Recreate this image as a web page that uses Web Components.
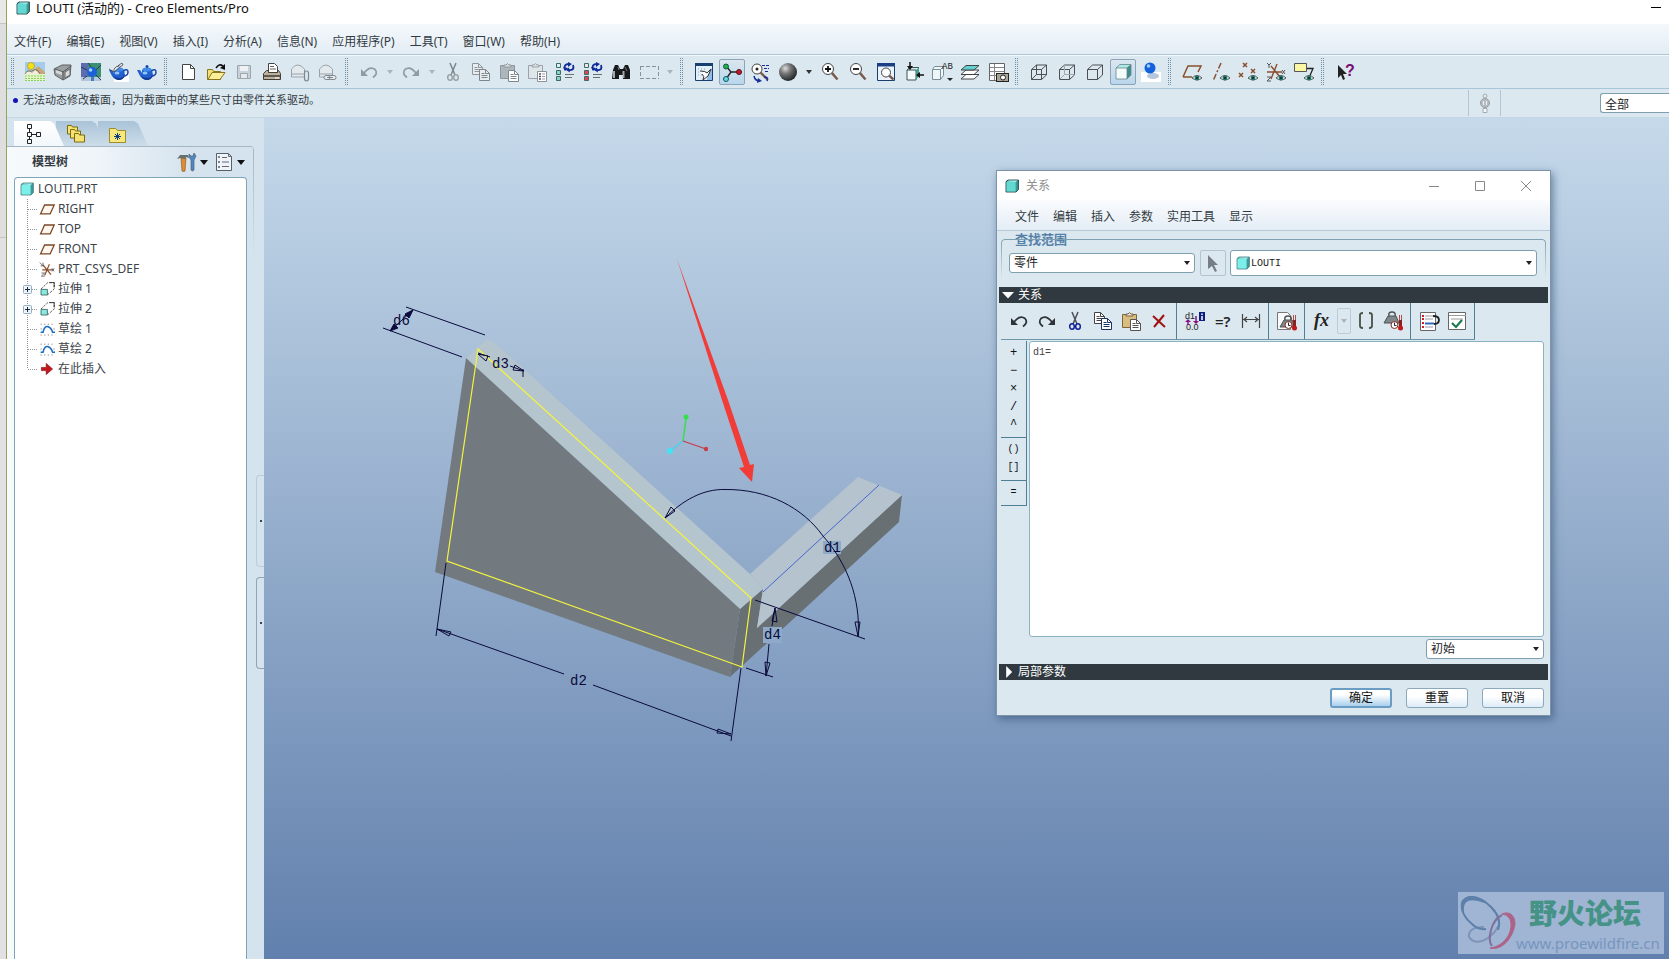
<!DOCTYPE html>
<html lang="zh-CN">
<head>
<meta charset="utf-8">
<title>LOUTI (活动的) - Creo Elements/Pro</title>
<style>
html,body{margin:0;height:100%;overflow:hidden}
body{font:12px/16px "Noto Sans","Noto Sans CJK SC",sans-serif;color:#333b42}
</style>
</head>
<body>
<creo-app></creo-app>
<script>
const RESET = `*{box-sizing:border-box}:host{display:block}
button,select,textarea{font:inherit;color:inherit;margin:0;padding:0;border:0;background:none}
svg{display:block}`;

function define(name, css, html, init) {
  const t = document.createElement('template');
  t.innerHTML = `<style>${RESET}${css}</style>${html}`;
  customElements.define(name, class extends HTMLElement {
    constructor() {
      super();
      this.attachShadow({mode: 'open'}).append(t.content.cloneNode(true));
    }
    connectedCallback() { if (init) init(this, this.shadowRoot); }
  });
}

const eye = `<path d="M10 16q5-5 10 0q-5 4-10 0z" fill="#e8f0ee" stroke="#333" stroke-width=".8"/><circle cx="15" cy="16" r="2.4" fill="#1c7a66"/><circle cx="15" cy="16" r="1" fill="#123"/>`;
const lens = (x, y, r, s) => `<path d="M${x+r*.7} ${y+r*.7}L17.500 17.500" stroke="#7a5a4c" stroke-width="2.400"/><circle cx="${x}" cy="${y}" r="${r}" fill="#fff" stroke="#444" stroke-width="1"/>${s}`;
const undo = c => `<path d="M2 7v7h7z" fill="${c}"/><path d="M5 11Q11 3.500 16 7.500Q19.500 11.500 14 15.500" fill="none" stroke="${c}" stroke-width="1.800"/>`;
const redo = c => `<g transform="matrix(-1 0 0 1 20 0)">${undo(c)}</g>`;
const cut = (a, b) => `<path d="M7 1l5 12M13 1L8 13" stroke="${a}" stroke-width="1.500"/><g fill="none" stroke="${b}" stroke-width="1.500"><ellipse cx="7" cy="15.500" rx="2.300" ry="2.800"/><ellipse cx="13" cy="15.500" rx="2.300" ry="2.800"/></g>`;
const sheet = (x, y, c, f) => `<path d="M${x} ${y}h6l4 4v7h-10z" fill="${f}" stroke="${c}"/><path d="M${x+6} ${y}v4h4M${x+2} ${y+4}h3M${x+2} ${y+6}h6M${x+2} ${y+8}h6" fill="none" stroke="${c}"/>`;
const copy = (a, b, f) => sheet(1.5, 1.5, a, f) + sheet(8.500, 7.500, b, f);
const clip = (c, f) => `<path d="M1.500 3.500h14v13h-14z" fill="${f}" stroke="${c}"/><path d="M5 5V3h2q1.500-3 3 0h2v2z" fill="#dde3e6" stroke="${c}"/>`;
const paste = (c, f, s) => clip(c, f) + sheet(9.500, 8.500, s, '#fff');
const pot = `<path d="M5 8q5-3 10 0l1 5q-2 5-6 5t-7-4L0 8l3 0 2 3z" fill="#2360cf"/><path d="M14 9q5-3 5 1t-5 4" fill="none" stroke="#1746a8" stroke-width="1.500"/><ellipse cx="10" cy="7.500" rx="4.500" ry="2" fill="#3f8bea"/><circle cx="10" cy="4.500" r="1.500" fill="#1746a8"/><ellipse cx="8" cy="11" rx="2.500" ry="1.500" fill="#8fc4f8"/><path d="M4 14q6 4 12 0-2 4-6 4t-6-4z" fill="#12398f"/>`;
const regen = (a, b) => `<g stroke="#3c6c68"><path d="M1.500 1.500h4v4h-4z" fill="${a}"/><path d="M1.500 8.500h4v4h-4zM1.500 14.500h4v4h-4z" fill="${b}"/></g><path d="M10 8q-2-6 4-6M18 3q2 6-5 5" fill="none" stroke="#102c9a" stroke-width="1.800"/><path d="M13 0l4 2-4 3zM14 5.500L11 8l4 2.500zM8 5l2 4 3-3z" fill="#102c9a"/><path d="M10 12.500h9M10 15.500h7" stroke="#67706f"/>`;
const box = extra => `<g fill="none" stroke="#4c4f54"><path d="M2.500 7.500h10v10h-10zM2.500 7.500l5-4.500h10l-5 4.500M17.500 3v10l-5 4.500"/>${extra}</g>`;
const solid = `<path d="M3 6l4-3.500h11L14 6z" fill="#aee9ea"/><path d="M14 6l4-3.500V13l-4 4z" fill="#3e8d8d"/><path d="M3 6h11v11H3z" fill="#f3fbfb"/><path d="M3 6l4-3.500h11V13l-4 4H3zM14 6v11M3 6h11l4-3.500" fill="none" stroke="#68868c" stroke-width=".8"/>`;
const part = (f, s) => `<path d="M2.500 4.500L5 2.500h13v12l-3 3H2.500z" fill="#3d9999" stroke="${s}"/><path d="M3 5h11.500v12H3z" fill="${f}"/><path d="M3.500 4.500l2.500-1.500h11L14.500 5z" fill="#a6f1ed"/>`;
const weight = `<path d="M2 14l4-7h8l3 7z" fill="#80878a" stroke="#4c5356"/><path d="M7 7q-1-4 3-4t3 4" fill="none" stroke="#4c5356" stroke-width="1.500"/>`;
const thermo = `<circle cx="11.500" cy="14" r="3.500" fill="#fff" stroke="#8b2a20"/><path d="M11.500 11.500v3h2" stroke="#222" fill="none"/><path d="M17.500 4v13" stroke="#8b2020" stroke-width="3"/><path d="M17.500 4v5" stroke="#f4e4e4" stroke-width="1.500"/><circle cx="17.500" cy="17" r="2.500" fill="#c01818"/>`;
const folder = (x, y) => `<path d="M${x} ${y}h4l1 1.500h5v7h-10z" fill="#f5e273" stroke="#7b6a10"/>`;
const mono = 'font-family="Liberation Mono,monospace"';

const ICONS = {
  scene: `<path d="M0 0h20v12H0z" fill="#a4cdec"/><path d="M0 12l4-4 3 2 6-6 7 6v4H0z" fill="#c6a77a"/><path d="M0 11l4-2 3 2 3-3 5 4H0z" fill="#f4ece0"/><path d="M0 12q2-4 4-3t5-1 6 4" stroke="#665" stroke-width=".8" fill="none"/><circle cx="6" cy="4" r="3.500" fill="#f5df19" stroke="#a68c10" stroke-width=".6"/><path d="M0 12h20v7H0z" fill="#e4f5c8"/><path d="M0 14h20M0 16.500h20M0 18.500h20" stroke="#87d35c" stroke-dasharray="2 1"/>`,
  view: `<path d="M1 7l8-4h9l-1 11-7 4-8-5z" fill="#9a9fa1" stroke="#5c6163"/><path d="M2 7l8 3v8M10 10l8-6" fill="none" stroke="#555"/><path d="M3 8l6 2v3l-6-2z" fill="#d4d8d9"/><path d="M12 10l5-3v6l-5 3z" fill="#d8dcdd" stroke="#666"/>`,
  room: `<path d="M0 1h20v18H0z" fill="#3c8e74"/><path d="M0 1h7v18H0z" fill="#5c6cad"/><path d="M0 15h20v4H0z" fill="#b5c7de"/><path d="M7 1l4 5M20 3l-5 5M0 5l6 3M2 17l4-3M15 13l5 5" stroke="#223f50"/><circle cx="11" cy="10" r="5" fill="#1c61d8"/><circle cx="9.500" cy="8" r="1.800" fill="#a9d3ff"/><path d="M10 15h3v4h-3z" fill="#4a7db4"/>`,
  pot1: `<path d="M5 11h15v9H5z" fill="#fff"/>${pot}<path d="M0 7l5 3V7q2-3 5-3V3l3-2 1 2-3 2-6 5" fill="#e3e6e8" stroke="#444" stroke-width=".8"/>`,
  pot2: pot,
  file: `<path d="M4.500 2.500h8l4 4v11h-12z" fill="#fff" stroke="#444"/><path d="M12.500 2.500v4h4" fill="none" stroke="#444"/>`,
  open: `<path d="M1.500 7.500h5l1 2h7v8h-13z" fill="#f5df74" stroke="#8a741c"/><path d="M2 17.500l4-7h13l-5 7z" fill="#fbee9b" stroke="#8a741c"/><path d="M10 6q3-5 7-2" fill="none" stroke="#111" stroke-width="1.500"/><path d="M19 2v6l-5-2z" fill="#111"/>`,
  save: `<path d="M3.500 3.500h13v13h-13z" fill="#c9d2d8" stroke="#9aa5ad"/><path d="M6 4h8v5H6z" fill="#eef2f4"/><path d="M6.500 11.500h7v5h-7z" fill="#e5eaee" stroke="#9aa5ad"/>`,
  print: `<path d="M6.500 1.500h6l3 3v6h-9z" fill="#fff" stroke="#444"/><path d="M8 4.500h4M8 7h6" stroke="#666"/><path d="M1.500 11.500l3-3h2v2h9v-2h1l2 3v6h-17z" fill="#bcb19c" stroke="#433e37"/><path d="M2 14h16" stroke="#433e37" stroke-width="1.500"/><path d="M13 16h4" stroke="#fff"/>`,
  mail: `<path d="M1.500 15V7q6-8 13 0v8z" fill="#e3e9ed" stroke="#98a3aa"/><path d="M1.500 12h13" fill="none" stroke="#98a3aa"/><path d="M14.500 11v5q0 3 2 3t2-3v-5q0-2-2-2t-2 2" fill="#dbe8f0" stroke="#7e878d" stroke-width="1.200"/>`,
  link: `<path d="M1.500 15V7q6-8 13 0v8z" fill="#e3e9ed" stroke="#98a3aa"/><path d="M1.500 12h13" fill="none" stroke="#98a3aa"/><rect x="6" y="13.500" width="7" height="4" rx="2" fill="#e8eef2" stroke="#7e878d"/><rect x="11" y="13.500" width="7" height="4" rx="2" fill="#e8eef2" stroke="#7e878d"/><path d="M9 15.500h6" stroke="#7e878d"/>`,
  undoG: undo('#909ba3'), redoG: redo('#909ba3'), cutG: cut('#7d868c','#9aa3a9'), copyG: copy('#8e979d','#7d868c','#e8edf0'), pasteG: paste('#8e979d','#adb6ba','#7d868c'),
  pasteS: clip('#9aa3a9','#dfe6ea') + `<path d="M10.500 9.500h9v10h-9z" fill="#fff" stroke="#8a9399"/><path d="M12 12h2M12 14.500h2M12 17h2" stroke="#556" stroke-width="1.500"/><path d="M15 12h3M15 14.500h3M15 17h3" stroke="#99a"/>`,
  regen: regen('#d8f3ee','#8ad3c4'), regenR: regen('#e8e8e8','#e04450'),
  find: `<path d="M2 8l2-5h3l2 4h3l2-4h3l2 5v9h-7v-4H8v4H1z" fill="#171a1c"/><path d="M3 9v7M12.500 9v7" stroke="#a8aaa8" stroke-width="2"/><path d="M7 5l1 3M14 5l2 4" stroke="#777"/>`,
  marquee: `<path d="M1 4.500h19M1 16.500h19M1.500 4v13M19.500 4v13" stroke="#8b9297" stroke-dasharray="4 2" fill="none"/>`,
  redraw: `<path d="M1.500 1.500h17v17h-17z" fill="#e2eff9" stroke="#17406e"/><path d="M1 1h18v3H1z" fill="#17406e"/><path d="M13 18q0-5 5-12v12z" fill="#8ebde6"/><path d="M4 7h8M4 10h6M4 13h6" stroke="#8aa" stroke-dasharray="1 2" fill="none"/><path d="M6 9q6 0 7 2l4-4-3 7-5 4q2-4-1-6" stroke="#333" fill="#fff"/>`,
  spin: `<path d="M4 4l5 6h8M9 10l-5 7" stroke="#222" stroke-width="1.300" fill="none"/><circle cx="4" cy="4.500" r="2.500" fill="#1eb43a" stroke="#155"/><circle cx="17" cy="10" r="2.500" fill="#c3182c" stroke="#511"/><circle cx="4" cy="17" r="2.500" fill="#64d8e4" stroke="#155"/>`,
  orient: lens(7, 7, 5, `<circle cx="7" cy="7" r="1.500" fill="#222"/>`) + `<path d="M12 3.500h7M14 6.500h5M15 9.500h4" stroke="#1a2f9c" stroke-dasharray="3 1"/><path d="M4 14q1 5 6 5M14 15q5 0 3 4" stroke="#1a2f9c" fill="none" stroke-width="1.500"/><path d="M8 16l4 3-5 2z" fill="#1a2f9c"/>`,
  shade: `<defs><radialGradient id="g" cx=".35" cy=".3" r=".75"><stop offset="0" stop-color="#ddd"/><stop offset=".4" stop-color="#777"/><stop offset="1" stop-color="#1c1f22"/></radialGradient></defs><circle cx="10" cy="10" r="9" fill="url(#g)"/>`,
  zoomin: lens(8, 7, 5.500, `<path d="M5 7h6M8 4v6" stroke="#111" stroke-width="1.800"/>`),
  zoomout: lens(8, 7, 5.500, `<path d="M5 7h6" stroke="#111" stroke-width="1.800"/>`),
  refit: `<path d="M1.500 1.500h17v17h-17z" fill="#eaf3fb" stroke="#17406e"/><path d="M1 1h18v3.500H1z" fill="#1b3f86"/>` + lens(10, 10.500, 4.500, ''),
  saved: `<path d="M3 8h9v10H3z" fill="#f4fbfa" stroke="#3b5755"/><path d="M12 8l3-2.500V14l-3 4z" fill="#3da08f"/><path d="M3 8l3-2.500h9" stroke="#3b5755" fill="none"/><path d="M6 0v6M20 13h-6" stroke="#111" stroke-width="1.500"/><path d="M3 4h6L6 8zM16 10v6l-4-3z" fill="#111"/>`,
  named: `<path d="M.5 7.500l2-3h9v9l-3 4h-8z" fill="#edf7fa" stroke="#7c8f99"/><path d="M.5 7.500h8v10M8.500 7.500l3-3" fill="none" stroke="#7c8f99"/><text x="10" y="7" font-size="9" fill="#222" ${mono}>AB</text><path d="M15 16h6l-3 3z" fill="#222"/>`,
  layers: `<g stroke="#333" stroke-width=".9"><path d="M1 17l5-4.500h13L14 17z" fill="#fff"/><path d="M1 12.500L6 8h13l-5 4.500z" fill="#fff"/><path d="M1 8l5-4.500h13L14 8z" fill="#66cfd0"/></g>`,
  viewmgr: `<path d="M1.500 1.500h15v17h-15z" fill="#fff" stroke="#666"/><path d="M2 5.500h14M2 9.500h14M2 13.500h14M6.500 2v16" stroke="#888"/><rect x="8.500" y="11.500" width="12" height="8" fill="#a9a599" stroke="#222"/><circle cx="15" cy="15.500" r="2.500" fill="#fff" stroke="#222"/>`,
  wire: box('<path d="M7.500 3v9.500h10M7.500 12.500l-5 5"/>'), hidden: box('<path d="M7.500 3v9.500h10M7.500 12.500l-5 5" stroke="#a4abb0"/>'), nohid: box(''), shaded: solid,
  enh: `<path d="M0 10h20v10H0z" fill="#fff"/><ellipse cx="12" cy="14" rx="6" ry="3" fill="#b5c6dd"/><circle cx="9" cy="6" r="5.500" fill="#1461dc"/><circle cx="7.500" cy="4" r="1.800" fill="#a3cbff"/>`,
  planes: `<path d="M1 15L6 4h13l-3 6M1 15h9" fill="none" stroke="#8a4f2c" stroke-width="1.500"/>${eye}`,
  axes: `<path d="M11 1L3 19" stroke="#8a4f2c" stroke-width="1.500" stroke-dasharray="6 2 2 2"/>${eye}`,
  points: `<path d="M5 1l4 4M9 1L5 5M13 7l4 4M17 7l-4 4M1 11l4 4M5 11l-4 4" stroke="#8a4f2c" stroke-width="1.500"/>${eye}`,
  csys: `<path d="M1 10h15M5 4l9 11M11 2L5 17" stroke="#8a4f2c" stroke-width="1.400"/><path d="M1 1l2 2 2-2M3 3v3M1 15h4l-4 4h4M16 8l3 4M19 8l-3 4" fill="none" stroke="#555"/>${eye}`,
  anno: `<path d="M.5 1.500h12v8H.500z" fill="#fbf8a4" stroke="#555"/><path d="M13 6.500h6l-3 7" stroke="#222" fill="none" stroke-width="1.300"/>${eye}`,
  help: `<path d="M3 3l9 9H8l2 5-2 1-2-5-3 3z" fill="#222"/><text x="10" y="14" font-size="16" font-weight="700" fill="#7a0c74" font-family="Liberation Sans,sans-serif">?</text>`,
  undo: undo('#2e3338'), redo: redo('#2e3338'), cut: cut('#4a4f55','#101f96'), copy: copy('#444','#1b3468','#fff'), paste: paste('#7c653d','#d9bd7e','#555'),
  del: `<path d="M4 5l12 11M15 4L5 16" stroke="#a01212" stroke-width="2"/>`,
  dims: `<text x="0" y="8" font-size="9" fill="#222" font-family="Liberation Sans,sans-serif">d1</text><text x="1" y="19" font-size="9" fill="#222" font-family="Liberation Sans,sans-serif">0.0</text><path d="M3 14V9M11 5v7" stroke="#8c1284" stroke-width="1.500"/><path d="M0 11h6L3 8zM8 10h6l-3 3z" fill="#8c1284"/><path d="M14 1h6v9h-6z" fill="#0c1e7e"/><path d="M17 2.500v1.500M17 5v4" stroke="#fff" stroke-width="1.500"/>`,
  eq: `<text x="2" y="16" font-size="15" font-weight="600" fill="#222" font-family="Noto Sans,sans-serif">=?</text>`,
  measure: `<path d="M1.500 3v14M18.500 3v14M2 8.500h16M6 6L3 8.500 6 11M14 6l3 2.500-3 2.500" fill="none" stroke="#444" stroke-width="1.200"/>`,
  units: `<path d="M.5 1.500h10l3 3v14H.5z" fill="#f7f9fa" stroke="#777"/><g transform="translate(1 2)">${weight}</g>${thermo}`,
  fx: `<text x="1" y="15" font-size="18" font-style="italic" font-weight="700" fill="#222" font-family="Liberation Serif,serif">fx</text>`,
  brackets: `<path d="M8 2q-3 0-3 2v11q0 2 3 2M14 2q3 0 3 2v11q0 2-3 2" fill="none" stroke="#4a5048" stroke-width="1.800"/>`,
  units2: `<g transform="translate(-1 -2)">${weight}</g>${thermo}`,
  sort: `<path d="M1.500 1.500h15v18h-15z" fill="#fff" stroke="#666"/><path d="M6 5h8M6 8h8M6 16h8" stroke="#99a"/><path d="M6 12.500h9" stroke="#2a6cc0" stroke-width="2"/><path d="M3 5h2M3 8h2M3 12h2M3 16h2" stroke="#c22" stroke-width="2"/><path d="M14 5q6 0 6 4t-5 4" fill="none" stroke="#222" stroke-width="1.800"/>`,
  verify: `<path d="M1.500 1.500h17v17h-17z" fill="#fff" stroke="#666"/><path d="M2 4.500h17M4 8h12" stroke="#999"/><path d="M5 12l4 4 6-7" fill="none" stroke="#1c7a52" stroke-width="2.200"/>`,
  tabTree: `<path d="M3.500 .5h4v4h-4zM3.500 8.500h4v4h-4zM3.500 15.500h4v4h-4zM12.500 8.500h4v4h-4zM5.500 5v3M5.500 13v2M8 10.500h4" fill="none" stroke="#1e2327"/>`,
  tabFolders: folder(1.500, 1.500) + folder(4.500, 5.500) + folder(8.500, 9.500),
  tabFav: `<path d="M1.500 4.500h6l2 2h8v12h-16z" fill="#f6e87c" stroke="#a08c28"/><path d="M9.500 9v7M6 12.500h7M7 10l5 5M12 10l-5 5" stroke="#123a7e"/>`,
  tools: `<path d="M4 6h5l-1 13q-1.500 1-3 0z" fill="#e08c34" stroke="#80501c" stroke-width=".6"/><path d="M0 7l3-4h8l1 3-3-1-1 2-5-1z" fill="#66706e"/><path d="M14 8l-2-3V2l2 2h2l1-3 2 3-2 4v10q-1.500 2-3 0z" fill="#4b88c8" stroke="#56616b" stroke-width=".7"/>`,
  list: `<path d="M2.500 1.500h12l3 3v14h-15z" fill="#eef4f8" stroke="#56616b"/><path d="M14.500 1.500v3h3M8 5.500h5M8 10h7M8 14.500h7" stroke="#667"/><path d="M4.500 4.500h1v1h-1zM4.500 9.500h1v1h-1zM4.500 14.500h1v1h-1z" stroke="#56616b"/>`,
  part: part('#7defe9', '#487b80'), app: part('#63d8d0', '#102c30'),
  plane: `<path d="M2 16L7 5h12l-5 11z" fill="#fff6ee" stroke="#7a4727" stroke-width="1.600"/>`,
  csysT: `<path d="M4 11h14M5 5l10 12M13 4L7 18" stroke="#8a4f2c" stroke-width="1.500"/><path d="M1 2l4 4M5 2v4H2M3 15h4l-4 4h4M16 9l3 4M19 9l-3 4" fill="none" stroke="#555"/>`,
  extrude: `<path d="M2.500 10.500h8v7h-8z" fill="#8beadf" stroke="#2f5b58"/><path d="M2.500 10L11 2h8v8l-8 7" fill="none" stroke="#333" stroke-dasharray="3 1.500"/><path d="M13 2h6v6" fill="none" stroke="#222"/>`,
  sketch: `<path d="M2 4h18M2 17.500h18M2 10h3M18 10h2" stroke="#667" stroke-dasharray="1.500 3"/><path d="M2 14h3Q7 6 11 7t6 7h3" fill="none" stroke="#1f6fc0" stroke-width="2"/>`,
  insert: `<path d="M3 8h6V3l8 7-8 7v-5H3z" fill="#c4161c" stroke="#7c1010" stroke-width=".8"/>`,
  pointer: `<path d="M5 2l10 10h-4l3 6-2 1-3-6-4 3z" fill="#767d84"/>`,
  light: `<circle cx="10" cy="3" r="2" fill="#e3eaee" stroke="#a3abb0"/><circle cx="10" cy="10" r="4.500" fill="#b4bcc0" stroke="#969ea3"/><path d="M8.500 8v4M11.500 8v4" stroke="#eef"/><path d="M8 15.500h4v4H8z" fill="#f4f7f8" stroke="#a3abb0"/>`
};

define('creo-icon', `:host{flex:none;width:20px;height:20px}svg{width:100%;height:100%;overflow:visible}`, ``, (el, root) => {
  root.querySelector('svg')?.remove();
  root.append(document.createRange().createContextualFragment(`<svg viewBox="0 0 20 20" fill="none" aria-hidden="true">${ICONS[el.getAttribute('name')]}</svg>`));
});

define('creo-tool', `
:host{flex:none;width:28px}
button{display:grid;place-items:center;width:26px;height:26px;margin:0 1px;border-radius:2px}
:host([on]) button{border:1px solid #8aa4b8;background:linear-gradient(#dbe6ef,#b9d6ec)}
:host([drop]){width:14px}:host([drop]) button{width:100%;margin:0}
:host([framed]) button{border:1px solid #bccbd6}
i{width:0;height:0;border:3px solid transparent;border-top:4px solid var(--arrow,#a9b4bc);border-bottom:0}
:host([big]) i{border-width:4px;border-top-width:5px;border-bottom:0}`,
`<button type="button"></button>`, (el, root) => {
  const b = root.querySelector('button'), n = el.getAttribute('icon');
  b.setAttribute('aria-label', n || '展开');
  b.innerHTML = n ? `<creo-icon name="${n}"></creo-icon>` : '<i></i>';
});

define('creo-menubar', `nav{display:flex;gap:var(--gap,15px)}`, `<nav><slot></slot></nav>`);
define('creo-menu', `button{white-space:nowrap;line-height:20px}`, `<button type="button"><slot></slot></button>`);

define('creo-select', `
:host{position:relative}
select{display:block;width:100%;height:var(--h,20px);padding:0 16px 0 var(--pad,4px);appearance:none;border:1px solid #7d9fae;border-radius:3px;background:#fff;color:#222;font:var(--f,inherit)}
i{position:absolute;right:5px;top:calc(50% - 2px);border:3px solid transparent;border-top:4px solid #222;border-bottom:0;pointer-events:none}
:host([cut]) select{border-right:0;border-radius:3px 0 0 3px;padding-right:0}:host([cut]) i{display:none}
creo-icon{position:absolute;left:5px;top:5px;width:16px;height:16px;pointer-events:none}`,
`<select></select><i></i>`, (el, root) => {
  const s = root.querySelector('select');
  s.innerHTML = `<option>${el.getAttribute('value')}</option>`;
  s.setAttribute('aria-label', el.getAttribute('label'));
  if (el.hasAttribute('icon')) s.insertAdjacentHTML('afterend', `<creo-icon name="${el.getAttribute('icon')}"></creo-icon>`);
});

define('creo-toolbar', `
div{display:flex;align-items:center;height:33px;padding-left:1px}
span{flex:none;width:13px;height:28px;background:repeating-linear-gradient(#6f8da3 0 1px,transparent 1px 2px) 3px 0/1px 28px no-repeat,repeating-linear-gradient(#6f8da3 0 1px,transparent 1px 2px) 5px 0/1px 28px no-repeat}`,
`<div role="toolbar"></div>`, (el, root) => {
  const items = 'scene view room pot1 pot2|file open save print mail link|undoG v redoG v cutG copyG pasteG pasteS regen regenR find marquee v|redraw spin* orient shade V zoomin zoomout refit saved named layers viewmgr|wire hidden nohid shaded* enh|planes axes points csys anno|help';
  root.querySelector('div').innerHTML = items.split('|').map(g => '<span></span>' + g.split(' ').map(n =>
    n === 'v' ? '<creo-tool drop></creo-tool>' : n === 'V' ? '<creo-tool drop style="--arrow:#333"></creo-tool>' :
    `<creo-tool icon="${n.replace('*','')}"${n.endsWith('*') ? ' on' : ''}></creo-tool>`).join('')).join('');
});

define('creo-tree-item', `
:host{display:flex;align-items:center;height:20px;color:#3c434a;white-space:nowrap}
creo-icon{width:16px;height:16px;margin-right:3px}
:host([root]) svg{display:none}:host([root]) creo-icon{margin-left:4px}
svg{flex:none}`,
`<svg width="24" height="20" viewBox="0 0 24 20" fill="none"></svg><slot></slot>`, (el, root) => {
  const end = el.hasAttribute('last') ? 10 : 20;
  const svg = root.querySelector('svg');
  svg.innerHTML = `<path d="M12.500 0V${end}M13 10.500h10" stroke="#8d969c" stroke-dasharray="1 1"/>` +
    (el.hasAttribute('plus') ? '<rect x="8.500" y="6.500" width="8" height="8" rx="1" fill="#eef4fa" stroke="#93adc2"/><path d="M10 10.500h5M12.500 8v5" stroke="#1c2a3a"/>' : '');
  svg.insertAdjacentHTML('afterend', `<creo-icon name="${el.getAttribute('icon')}"></creo-icon>`);
});

define('creo-sidebar', `
:host{display:flex;flex-direction:column;width:257px;padding-top:3px;background:#d5e3ee;min-height:0}
.tabs{display:flex;padding-left:7px;height:25px;flex:none}
.tabs button{width:50px;height:25px;margin-right:-8px;padding-left:10px;clip-path:polygon(0 0,72% 0,80% 10%,100% 100%,0 100%);position:relative;background:linear-gradient(#a9c3d8,#cddde9)}
.tabs button:nth-child(1){background:linear-gradient(#fff,#f2f7fb);z-index:3}
.tabs button:nth-child(2){z-index:2}
.body{flex:1;display:flex;min-height:0}
.panel{flex:1;display:flex;flex-direction:column;min-width:0;padding:0 7px;border-top:1px solid #a5b6c4;background:linear-gradient(90deg,#f7fafc,#f0f5f9 35%,#d5e3ee 75%);border-radius:0 4px 0 0;position:relative}
.panel::after{content:"";position:absolute;right:0;top:2px;width:1px;height:110px;background:linear-gradient(#a5b6c4,#d5e3ee)}
header{display:flex;align-items:center;height:30px;padding-left:18px;font-weight:700;flex:none}
h2{font:inherit;flex:1;margin:0}
header creo-tool{--arrow:#111;margin-right:-3px}
header creo-tool[drop]{width:12px;margin-right:0}
.tree{flex:1;border:1px solid #7fa6b8;border-bottom:0;border-radius:4px 4px 0 0;background:#fff;padding-top:1px}
.sash{width:10px;flex:none;padding:329px 0 0 2px}
.sash b{display:grid;place-items:center;width:8px;height:92px;margin-bottom:10px;border:1px solid #bccbd8;border-right:0;border-radius:4px 0 0 4px}
.sash b+b{border-color:#90a5b6}
.sash b::after{content:"";width:2px;height:2px;background:#345}`,
`<div class="tabs" role="tablist"><button role="tab" aria-label="模型树"><creo-icon name="tabTree"></creo-icon></button><button role="tab" aria-label="文件夹"><creo-icon name="tabFolders"></creo-icon></button><button role="tab" aria-label="收藏夹"><creo-icon name="tabFav"></creo-icon></button></div>
<div class="body"><section class="panel"><header><h2>模型树</h2><creo-tool icon="tools"></creo-tool><creo-tool drop big></creo-tool><creo-tool icon="list"></creo-tool><creo-tool drop big></creo-tool></header>
<div class="tree"><slot></slot></div></section><div class="sash"><b></b><b></b></div></div>`);

define('creo-viewport', `
:host{position:relative;overflow:hidden;min-width:0;background:linear-gradient(#c5d9ea,#6280ad)}
svg{overflow:visible}
text{font:14px "Liberation Mono",monospace;fill:#0a0a3c}`,
`<svg width="700" height="700" viewBox="264 118 700 700" fill="none">
<path d="M740 609L763 589 757 628 902 495 899 522 730 677z" fill="#687074"/>
<path d="M750 574L858 477 902 495 757 628 763 589z" fill="#b4c3cd"/>
<path d="M466 358L487 339 495 343 750 574 763 589 740 609z" fill="#b5c5ce"/>
<path d="M466 358L435 572 730 677 740 609z" fill="#727a80"/>
<g stroke="#f4f43c" stroke-width="1.200"><path d="M478 349L447 561 742 667 751 598z"/></g>
<path d="M763 592L879 485" stroke="#4a64d0"/>
<path d="M823 541h18v13h-18zM763 627h19v16h-19z" fill="#8fa9c9"/>
<g stroke="#0a0a3c">
<path d="M406 307L485 335M383 328L462 357M413 310L390 331"/>
<path d="M478 353L490 357M510 366L524 371M523 369v8"/>
<path d="M446 563L436 636M741 668L731 741M437 629L564 674M593 685L731 736"/>
<path d="M665 518C683 500 703 489 725 489.500C768 489 803 508 823 536C847 563 861 599 858 637M755 600L865 639"/>
<path d="M775 608L772 626M769 644L766 676M746 668L773 677"/>
</g>
<g stroke="#0a0a3c">
<path d="M413 310l-8 4 4 4zM390 331l8-3-4-4z" fill="#0a0a3c"/>
<path d="M478 354l10 2-2 5zM524 371l-11-1 2-5z"/>
<path d="M437 629l14 3-2 4zM731 734l-14-1 1-4zM665 518l6-11 4 4zM858 636l-3-14h5zM775 608l-3 13 5 1zM766 676l-1-14 5 1z"/>
</g>
<text x="393" y="325">d6</text><text x="492" y="368">d3</text><text x="570" y="685">d2</text><text x="824" y="552">d1</text><text x="764" y="639">d4</text>
<path d="M683 441L686 419" stroke="#35e04a" stroke-width="1.500"/><circle cx="686" cy="417" r="2.500" fill="#35e04a"/>
<path d="M683 441L671 450" stroke="#40d4f0" stroke-width="1.200"/><circle cx="670" cy="451" r="3" fill="#40e4f4"/>
<path d="M683 441L706 449" stroke="#c23c48" stroke-width="1.200"/><circle cx="706" cy="449" r="2.200" fill="#cc3c48"/>
<path d="M677 259L728 400 750 465 754 464 752 482 739 468 744 467 722 400z" fill="#f23c38"/>
</svg><slot></slot>`);

define('creo-section', `
:host{display:flex;align-items:center;height:16px;margin:0 2px;padding-left:3px;background:#30393f}
button{display:flex;align-items:center;gap:4px;color:#fff;line-height:16px}
i{width:12px;height:12px;background:#fff;clip-path:polygon(0 25%,100% 25%,50% 80%)}
:host([closed]) i{clip-path:polygon(35% 0,85% 50%,35% 100%)}`, `<button type="button"><i></i><slot></slot></button>`);

define('creo-dialog', `
:host{position:absolute;left:732px;top:52px;width:555px;border:1px solid #7e93a8;background:#dbe8f0;box-shadow:2px 3px 8px #2a4a7099}
.title{display:flex;align-items:center;height:29px;padding:0 18px 0 7px;background:#fff;color:#8e8e8e}
.title creo-icon{width:16px;height:16px;margin-right:6px}
.title span{flex:1}.title button{margin-left:34px}
.menu{height:31px;padding:7px 18px 0;background:linear-gradient(#fafcfe,#e4edf5);border-bottom:1px solid #b8cad8;--gap:14px}
fieldset{position:relative;margin:0 4px;padding:3px 9px 11px 8px;border:0;min-width:0}
fieldset::before{content:"";position:absolute;inset:-8px 0 8px;border:1px solid #7d9fb0;border-bottom:0;border-radius:4px 4px 0 0;mask:linear-gradient(#000,transparent)}
legend{position:relative;padding:0 4px;margin-left:2px;background:#dbe8f0;color:#5681a8;font:700 13px/16px "Noto Sans CJK SC",sans-serif}
.row{display:flex;align-items:center;position:relative}
.row creo-select:first-child{width:186px}
.row creo-select:last-child{flex:1;--h:26px;--pad:20px;--f:10px "Liberation Mono",monospace}
.pick{display:grid;place-items:center;width:26px;height:26px;margin:0 4px 0 5px;border:1px solid #b3c4d0;border-radius:2px}
.bar{display:flex;margin:0 4px;height:37px;width:max-content;border-bottom:1px solid #6f96a8}
.bar div{display:flex;align-items:center;padding:0 3px 0 4px;border-right:1px solid #4e7f96}
.edit{display:flex;align-items:flex-start;gap:2px;padding:1px 6px 0 4px;height:297px}
.ops{width:26px;flex:none;border-right:1px solid #4e7f96;font:12px/18px "Liberation Mono",monospace;color:#111}
.ops div{display:flex;flex-direction:column;padding:3px 0;border-bottom:1px solid #4e7f96}
.ops button{height:18px;line-height:18px}
.ops div+div button{font-size:10px}
textarea{flex:1;height:296px;resize:none;border:1px solid #8bb2c0;border-radius:3px;background:#fff;padding:4px 3px;font:10px/14px "Liberation Mono",monospace;color:#444;outline:0}
.state{display:flex;justify-content:flex-end;padding:2px 6px 5px 0}.state creo-select{width:118px}
.actions{display:flex;justify-content:flex-end;gap:14px;padding:8px 6px 7px}
.actions button{width:62px;height:20px;border:1px solid #8aa9bc;border-radius:3px;background:linear-gradient(#fff 40%,#dcebf6);color:#111;line-height:16px}
.actions button:first-child{border:2px solid #6b9cc4;background:linear-gradient(#fff 30%,#a9cfee);line-height:14px}`,
`<div class="title"><creo-icon name="app"></creo-icon><span>关系</span>
<button aria-label="最小化"><svg width="12" height="12" fill="none" stroke="#888"><path d="M1 6.500h10"/></svg></button><button aria-label="最大化"><svg width="12" height="12" fill="none" stroke="#888"><path d="M1.500 1.500h9v9h-9z"/></svg></button><button aria-label="关闭"><svg width="12" height="12" fill="none" stroke="#888"><path d="M1 1l10 10M11 1L1 11"/></svg></button></div>
<div class="menu"><creo-menubar><creo-menu>文件</creo-menu><creo-menu>编辑</creo-menu><creo-menu>插入</creo-menu><creo-menu>参数</creo-menu><creo-menu>实用工具</creo-menu><creo-menu>显示</creo-menu></creo-menubar></div>
<fieldset><legend>查找范围</legend><div class="row"><creo-select value="零件" label="对象类型"></creo-select><button class="pick" aria-label="选取"><creo-icon name="pointer"></creo-icon></button><creo-select value="LOUTI" label="对象" icon="part"></creo-select></div></fieldset>
<creo-section>关系</creo-section>
<div class="bar" role="toolbar"><div><creo-tool icon="undo"></creo-tool><creo-tool icon="redo"></creo-tool><creo-tool icon="cut"></creo-tool><creo-tool icon="copy"></creo-tool><creo-tool icon="paste"></creo-tool><creo-tool icon="del"></creo-tool></div><div><creo-tool icon="dims"></creo-tool><creo-tool icon="eq"></creo-tool><creo-tool icon="measure"></creo-tool></div><div><creo-tool icon="units"></creo-tool></div><div><creo-tool icon="fx"></creo-tool><creo-tool drop framed></creo-tool><creo-tool icon="brackets"></creo-tool><creo-tool icon="units2"></creo-tool></div><div><creo-tool icon="sort"></creo-tool><creo-tool icon="verify"></creo-tool></div></div>
<div class="edit"><div class="ops"><div><button>+</button><button>−</button><button>×</button><button>/</button><button>^</button></div><div><button>()</button><button>[]</button></div><div><button>=</button></div></div><textarea aria-label="关系" spellcheck="false">d1=</textarea></div>
<div class="state"><creo-select value="初始" label="状态"></creo-select></div>
<creo-section closed>局部参数</creo-section>
<div class="actions"><button>确定</button><button>重置</button><button>取消</button></div>`);

define('creo-watermark', `
:host{position:absolute;right:5px;bottom:5px;display:flex;width:206px;height:62px;background:#a0b4d3}
svg{flex:none}
p{margin:0;white-space:nowrap}
.name{font:900 28px/41px "Noto Sans CJK SC",sans-serif;color:#459287;padding-left:13px}
a{display:block;font:15px/20px "Noto Sans",sans-serif;color:#7596bf;text-decoration:none}`,
`<svg width="58" height="62" viewBox="0 0 58 62" fill="none"><path d="M26 35Q10 35 11 45Q17 54 30 46Q38 40 40 34" stroke="#7e93b8" stroke-width="2"/><path d="M40 38C46 22 26 5 12 5C-2 8 4 24 14 32Q20 38 28 37" stroke="#5c80aa" stroke-width="2"/><path d="M5 20Q1 6 13 5Q20 5 27 10Q16 6 10 8Q4 10 5 20z" fill="#5c80aa" stroke="#5c80aa" stroke-width="2"/><path d="M44 23Q36 27 33 38T34 54" stroke="#7e719f" stroke-width="2"/><path d="M44 22C50 19 57 22 57 32C55 46 44 59 32 56C48 54 56 38 52 27Q49 22 44 22z" fill="#ad6389" stroke="#ad6389"/></svg><div><p class="name">野火论坛</p><a href="#">www.proewildfire.cn</a></div>`);

define('creo-app', `
:host{display:grid;grid-template-columns:7px 1fr;height:100vh}
.edge{background:linear-gradient(#e8e8e8 23px,#c4c4c4 23px 24px,#dedede 24px 237px,#c4c4c4 237px 238px,#e2e0e2 238px);border-right:1px solid #91a65a}
.win{display:flex;flex-direction:column;min-width:0;min-height:0;background:#dbe8f0}
.title{display:flex;align-items:center;height:24px;padding:0 8px 8px;background:#fff;font-size:13px;line-height:16px;color:#111;flex:none}
.title creo-icon{width:16px;height:16px;margin-right:5px}.title span{flex:1}
.menu{height:30px;padding:8px 7px 0;background:linear-gradient(#f4f8fd,#e3edf4);flex:none}
.tools{height:35px;border-top:1px solid #a9c6d9;border-bottom:1px solid #a9c6d9;box-shadow:inset 0 1px #f4f8fb;flex:none}
.status{display:flex;align-items:center;height:29px;border-bottom:1px solid #c5d6e4;flex:none;font-size:11px}
.status p{flex:1;margin:0;padding:0 0 6px 16px;position:relative}
.status p::before{content:"";position:absolute;left:6px;top:6px;width:5px;height:5px;border-radius:50%;background:#1414b4}
.status div{width:33px;height:26px;display:grid;place-items:center;border:1px solid #b4c6d3;border-width:0 1px}
.status creo-select{width:69px;margin-left:99px;--f:12px "Noto Sans CJK SC",sans-serif}
main{flex:1;display:grid;grid-template-columns:257px 1fr;min-height:0}`,
`<div class="edge"></div><div class="win">
<div class="title"><creo-icon name="app"></creo-icon><span>LOUTI (活动的) - Creo Elements/Pro</span><button aria-label="最小化"><svg width="10" height="2"><path d="M0 0h10v1H0z"/></svg></button></div>
<div class="menu"><creo-menubar><creo-menu>文件(F)</creo-menu><creo-menu>编辑(E)</creo-menu><creo-menu>视图(V)</creo-menu><creo-menu>插入(I)</creo-menu><creo-menu>分析(A)</creo-menu><creo-menu>信息(N)</creo-menu><creo-menu>应用程序(P)</creo-menu><creo-menu>工具(T)</creo-menu><creo-menu>窗口(W)</creo-menu><creo-menu>帮助(H)</creo-menu></creo-menubar></div>
<div class="tools"><creo-toolbar></creo-toolbar></div>
<div class="status"><p>无法动态修改截面，因为截面中的某些尺寸由零件关系驱动。</p><div><creo-icon name="light"></creo-icon></div><creo-select cut value="全部" label="过滤器"></creo-select></div>
<main><creo-sidebar>
<creo-tree-item root icon="part">LOUTI.PRT</creo-tree-item>
<creo-tree-item icon="plane">RIGHT</creo-tree-item><creo-tree-item icon="plane">TOP</creo-tree-item><creo-tree-item icon="plane">FRONT</creo-tree-item>
<creo-tree-item icon="csysT">PRT_CSYS_DEF</creo-tree-item>
<creo-tree-item icon="extrude" plus>拉伸 1</creo-tree-item><creo-tree-item icon="extrude" plus>拉伸 2</creo-tree-item>
<creo-tree-item icon="sketch">草绘 1</creo-tree-item><creo-tree-item icon="sketch">草绘 2</creo-tree-item>
<creo-tree-item icon="insert" last>在此插入</creo-tree-item>
</creo-sidebar><creo-viewport><creo-dialog role="dialog" aria-label="关系"></creo-dialog><creo-watermark></creo-watermark></creo-viewport></main></div>`);
</script>
</body>
</html>
